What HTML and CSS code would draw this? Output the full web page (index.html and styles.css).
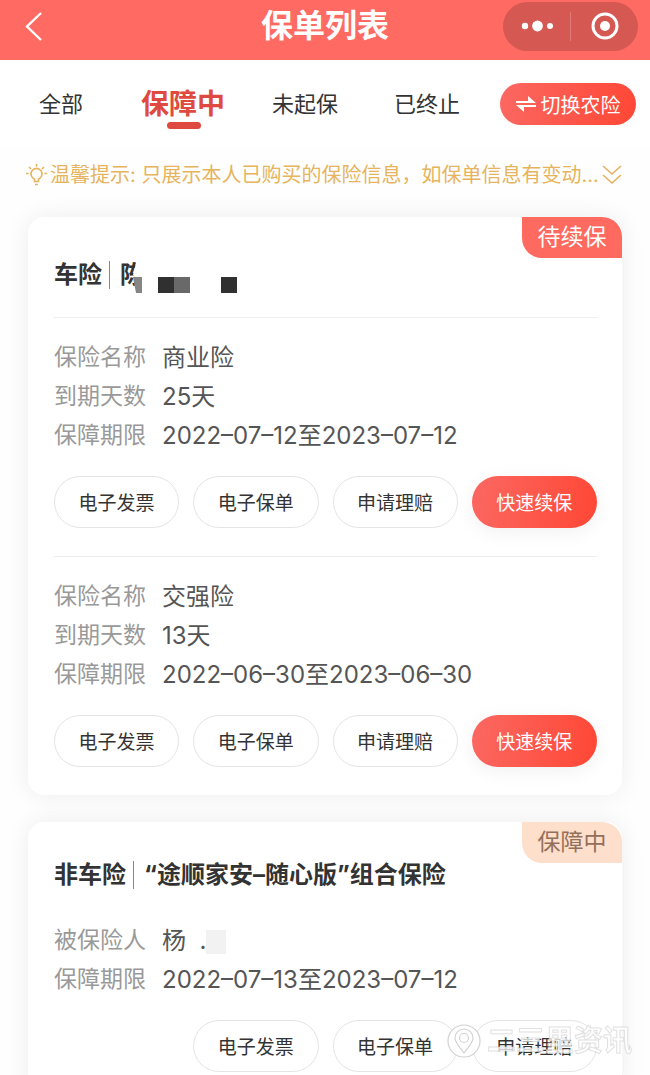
FILE: index.html
```html
<!DOCTYPE html>
<html lang="zh-CN">
<head>
    <meta charset="UTF-8">
    <meta name="viewport" content="width=device-width, initial-scale=1.0">
    <title>保单列表</title>
    <link rel="stylesheet" href="styles.css">
</head>
<body>
    <header class="header">
        <button class="back" aria-label="返回">
            <svg width="20" height="32" viewBox="0 0 20 32"><path d="M17 3 3 16.500 17 30" fill="none" stroke="#fff" stroke-width="2.400"/></svg>
        </button>
        <h1>保单列表</h1>
        <div class="capsule">
            <button aria-label="更多">
                <svg width="32" height="14" viewBox="0 0 32 14" fill="#fff"><circle cx="4" cy="7" r="3.200"/><circle cx="16.500" cy="7" r="5.400"/><circle cx="29" cy="7" r="3"/></svg>
            </button>
            <button aria-label="关闭">
                <svg width="28" height="28" viewBox="0 0 28 28"><circle cx="14" cy="14" r="12" fill="none" stroke="#fff" stroke-width="3"/><circle cx="14" cy="14" r="5" fill="#fff"/></svg>
            </button>
        </div>
    </header>

    <div class="toolbar">
        <nav class="tabs">
            <a href="#all">全部</a>
            <a href="#active" class="active">保障中</a>
            <a href="#pending">未起保</a>
            <a href="#ended">已终止</a>
        </nav>
        <button class="switch-btn">
            <svg width="20" height="16" viewBox="0 0 20 16" fill="#fff"><path d="M0 5h12V0l8 7H0zM20 11H8v5L0 9h20z"/></svg>
            切换农险
        </button>
    </div>

    <main class="content">
        <div class="notice">
            <svg width="21" height="22" viewBox="0 0 21 22" fill="none" stroke="#e6b45c" stroke-width="1.600"><path d="M8.500 17.500v-2.500a5.500 5.500 0 1 1 4 0v2.500zM9 20.500h3M10.500 0v2.500M3 3l2 2M18 3l-2 2M0 9.500h2.500M18.500 9.500H21"/></svg>
            <p>温馨提示: 只展示本人已购买的保险信息，如保单信息有变动...</p>
            <button class="expand" aria-label="展开">
                <svg width="20" height="20" viewBox="0 0 20 20" fill="none" stroke="#e6b060" stroke-width="1.600"><path d="M1 1l9 8 9-8M1 10l9 8 9-8"/></svg>
            </button>
        </div>

        <article class="card">
            <span class="badge badge-renew">待续保</span>
            <h2 class="card-title lined">车险<i class="bar"></i>陈
                <svg class="mosaic" width="108" height="40" viewBox="0 0 108 40"><path d="M5 0h25v40H4V24L0 20z" fill="#fff"/><path d="M0 22h9v16H3z" fill="#868686"/><path d="M25 22h16v16H25zM88 22h16v16H88z" fill="#303030"/><path d="M41 22h16v16H41z" fill="#696969"/></svg>
            </h2>
            <section class="policy">
                <dl>
                    <dt>保险名称</dt><dd>商业险</dd>
                    <dt>到期天数</dt><dd>25天</dd>
                    <dt>保障期限</dt><dd>2022–07–12至2023–07–12</dd>
                </dl>
                <div class="actions">
                    <button>电子发票</button>
                    <button>电子保单</button>
                    <button>申请理赔</button>
                    <button class="primary">快速续保</button>
                </div>
            </section>
            <section class="policy">
                <dl>
                    <dt>保险名称</dt><dd>交强险</dd>
                    <dt>到期天数</dt><dd>13天</dd>
                    <dt>保障期限</dt><dd>2022–06–30至2023–06–30</dd>
                </dl>
                <div class="actions">
                    <button>电子发票</button>
                    <button>电子保单</button>
                    <button>申请理赔</button>
                    <button class="primary">快速续保</button>
                </div>
            </section>
        </article>

        <article class="card">
            <span class="badge badge-active">保障中</span>
            <h2 class="card-title">非车险<i class="bar"></i>“途顺家安–随心版”组合保险</h2>
            <section class="policy">
                <dl>
                    <dt>被保险人</dt><dd>杨 &nbsp;.<i class="name-mask"></i></dd>
                    <dt>保障期限</dt><dd>2022–07–13至2023–07–12</dd>
                </dl>
                <div class="actions right">
                    <button>电子发票</button>
                    <button>电子保单</button>
                    <button>申请理赔</button>
                </div>
            </section>
        </article>
    </main>

    <div class="watermark">
        <svg width="34" height="34" viewBox="0 0 34 34" fill="#fff" stroke="#d2d2d2" stroke-width="1.200"><circle cx="17" cy="17" r="16"/><path d="M17 29C12 22 8 19 8 14a9 9 0 0 1 18 0c0 5-4 8-9 15z"/><circle cx="17" cy="14" r="4.500"/></svg>
        <span>二三里资讯</span>
    </div>
</body>
</html>
```

FILE: styles.css
```css
* {
    box-sizing: border-box;
}
body {
    margin: 0;
    height: 100vh;
    display: flex;
    flex-direction: column;
    overflow: hidden;
    background: #fefefe;
    color: #333;
    font-family: Inter, "Noto Sans CJK SC", sans-serif;
}
button {
    padding: 0;
    border: none;
    background: none;
    color: inherit;
    font-family: inherit;
    cursor: pointer;
}
svg {
    display: block;
    flex: none;
}

/* header */
.header {
    display: grid;
    grid-template-columns: 1fr auto 1fr;
    align-items: center;
    height: 60px;
    flex: none;
    padding: 0 12px 8px;
    background: #ff6a63;
    color: #fff;
}
.header h1 {
    margin: 0;
    font-size: 32px;
    line-height: 40px;
    font-weight: 700;
}
.back {
    justify-self: start;
    padding-left: 12px;
}
.capsule {
    justify-self: end;
    display: flex;
    align-items: center;
    width: 135px;
    height: 49px;
    border-radius: 25px;
    background: #d65853;
}
.capsule button {
    flex: 1;
    height: 29px;
    display: flex;
    align-items: center;
    justify-content: center;
}
.capsule button + button {
    border-left: 1px solid #e07b77;
}

/* tabs */
.toolbar {
    display: flex;
    align-items: center;
    gap: 12px;
    flex: none;
    height: 88px;
    padding-right: 14px;
    background: #fff;
}
.tabs {
    flex: 1;
    display: flex;
    align-items: center;
}
.tabs a {
    position: relative;
    flex: 1;
    text-align: center;
    font-size: 22px;
    line-height: 40px;
    color: #333;
    text-decoration: none;
}
.tabs .active {
    font-size: 28px;
    font-weight: 700;
    color: #df4a40;
}
.tabs .active::after {
    content: "";
    position: absolute;
    left: 50%;
    bottom: -5px;
    width: 34px;
    height: 7px;
    margin-left: -16px;
    border-radius: 4px;
    background: #df4a40;
}
.switch-btn {
    display: flex;
    align-items: center;
    justify-content: center;
    gap: 5px;
    width: 136px;
    height: 42px;
    border-radius: 21px;
    background: linear-gradient(100deg, #fb6862, #ff4735);
    color: #fff;
    font-size: 20px;
}

/* list */
.content {
    flex: 1;
    min-height: 0;
    overflow-y: auto;
    scrollbar-width: none;
    padding: 12px 28px 28px;
}
.notice {
    display: flex;
    align-items: center;
    height: 30px;
    margin-bottom: 27px;
    color: #e6b45c;
}
.notice svg {
    margin-left: -2px;
}
.notice p {
    flex: 1;
    min-width: 0;
    margin: 0 0 0 3px;
    font-size: 20px;
    line-height: 30px;
    white-space: nowrap;
}
.card {
    position: relative;
    margin-bottom: 27px;
    padding: 0 25px 0 26px;
    border-radius: 16px;
    background: #fff;
    box-shadow: 0 0 24px rgba(0, 0, 0, 0.07);
}
.badge {
    position: absolute;
    top: 0;
    right: 0;
    width: 100px;
    height: 41px;
    border-radius: 0 20px 0 20px;
    font-size: 23px;
    line-height: 41px;
    text-align: center;
}
.badge-renew {
    background: #ff6a60;
    color: #fff;
}
.badge-active {
    background: #fddfcc;
    color: #94705a;
}
.card-title {
    display: flex;
    align-items: center;
    margin: 0;
    padding-top: 33px;
    font-size: 24px;
    line-height: 40px;
    font-weight: 700;
}
.card-title.lined {
    padding: 38px 0 22px;
}
.bar {
    width: 1px;
    height: 28px;
    margin: 0 10px 0 7px;
    background: #888;
}
/* covers the rest of the holder's name */
.mosaic {
    margin-left: -11px;
}
.policy {
    padding: 20px 0 28px;
    border-top: 1px solid #eee;
}
.card-title:not(.lined) + .policy {
    padding-top: 25px;
    border-color: transparent;
}
dl {
    display: grid;
    grid-template-columns: auto 1fr;
    column-gap: 16px;
    margin: 0;
    line-height: 39px;
}
dt {
    font-size: 23px;
    color: #999;
}
dd {
    margin: 0;
    font-size: 24px;
    color: #555;
}
.name-mask {
    display: inline-block;
    width: 20px;
    height: 24px;
    vertical-align: middle;
    background: #f2f2f2;
}
.actions {
    display: grid;
    grid-template-columns: repeat(4, 1fr);
    gap: 14px;
    margin-top: 21px;
}
.actions button {
    height: 52px;
    padding-bottom: 2px;
    border: 1px solid #e4e4e4;
    border-radius: 26px;
    background: #fff;
    font-size: 19px;
}
.actions .primary {
    border: none;
    background: linear-gradient(100deg, #fb6862, #ff4735);
    box-shadow: 0 4px 20px rgba(0, 0, 0, 0.06);
    color: #fff;
}
.actions.right button:first-child {
    grid-column-start: 2;
}

/* watermark lies over the page */
.watermark {
    position: fixed;
    right: 18px;
    bottom: 14px;
    display: flex;
    align-items: center;
    gap: 6px;
    font-size: 29px;
    line-height: 40px;
    font-weight: 700;
    color: rgba(255, 255, 255, 0.75);
    -webkit-text-stroke: 1px rgba(205, 205, 205, 0.6);
    pointer-events: none;
}
```
